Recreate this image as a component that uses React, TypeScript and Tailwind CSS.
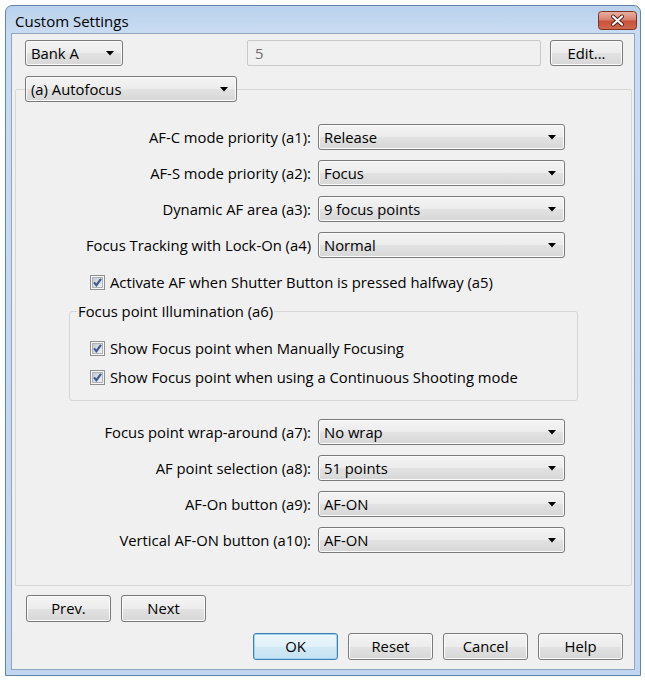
import React from "react";

function Arrow() {
  return (
    <svg width="8" height="5" viewBox="0 0 8 5" className="shrink-0">
      <polygon points="0,0 8,0 4,4.5" fill="#000" />
    </svg>
  );
}

function Combo({ text, w }: { text: string; w: string }) {
  return (
    <div
      className={`flex h-[26px] ${w} items-center justify-between rounded-[3px] border border-[#7a7a7a] bg-[linear-gradient(to_bottom,#f4f4f4_0%,#ececec_50%,#e2e2e2_50%,#d7d7d7_100%)] pl-[5px] pr-[8px] shadow-[inset_0_0_0_1px_#fbfbfb] leading-none`}
    >
      <span>{text}</span>
      <Arrow />
    </div>
  );
}

function Btn({ text, def }: { text: string; def?: boolean }) {
  return def ? (
    <div className="flex h-[27px] w-[85px] items-center justify-center rounded-[3px] border border-[#3c7fb1] bg-[linear-gradient(to_bottom,#eef7fc_0%,#e0f0f9_50%,#d2e9f5_50%,#c6e1f1_100%)] shadow-[inset_0_0_0_1px_#9fd5f3] leading-none">
      {text}
    </div>
  ) : (
    <div className="flex h-[27px] w-[85px] items-center justify-center rounded-[3px] border border-[#7a7a7a] bg-[linear-gradient(to_bottom,#f4f4f4_0%,#ececec_50%,#e2e2e2_50%,#d7d7d7_100%)] shadow-[inset_0_0_0_1px_#fbfbfb] leading-none">
      {text}
    </div>
  );
}

function Check({ text }: { text: string }) {
  return (
    <div className="flex h-[20px] items-center gap-[5px]">
      <svg width="15" height="15" viewBox="0 0 15 15" className="shrink-0">
        <defs>
          <linearGradient id="cbg" x1="0" y1="0" x2="1" y2="1">
            <stop offset="0" stopColor="#c2c7cd" />
            <stop offset="1" stopColor="#f3f3f4" />
          </linearGradient>
        </defs>
        <rect x="0.5" y="0.5" width="14" height="14" fill="#f6f6f6" stroke="#8e8f8f" />
        <rect x="2.5" y="2.5" width="10" height="10" fill="url(#cbg)" stroke="#aeb2b8" />
        <path d="M4 7.4 L6.4 10.2 L11 3.8" fill="none" stroke="#3f5b91" strokeWidth="2.1" />
      </svg>
      <span className="leading-none">{text}</span>
    </div>
  );
}

function Row({ label, value }: { label: string; value: string }) {
  return (
    <>
      <div className="flex h-[26px] items-center justify-end leading-none">{label}</div>
      <Combo text={value} w="w-[247px]" />
    </>
  );
}

function CloseButton() {
  return (
    <div className="mr-[3px] mt-[5px]">
      <svg width="39" height="19" viewBox="0 0 39 19">
        <defs>
          <linearGradient id="cls" x1="0" y1="0" x2="0" y2="1">
            <stop offset="0" stopColor="#eab2a4" />
            <stop offset="0.45" stopColor="#d88170" />
            <stop offset="0.55" stopColor="#c9523b" />
            <stop offset="1" stopColor="#d06a4e" />
          </linearGradient>
        </defs>
        <rect x="0.5" y="0.5" width="38" height="18" rx="3" fill="url(#cls)" stroke="#7a3427" />
        <path d="M15 5.5 L24 13.5 M24 5.5 L15 13.5" stroke="#4b1d16" strokeWidth="4" strokeLinecap="round" />
        <path d="M15 5.5 L24 13.5 M24 5.5 L15 13.5" stroke="#ffffff" strokeWidth="2.2" strokeLinecap="round" />
      </svg>
    </div>
  );
}

export default function App() {
  return (
    <div className="min-h-screen bg-white pl-[5px] pt-[5px] font-['Open_Sans','Noto_Sans',sans-serif] text-[14.8px] text-black">
      <div className="flex h-[671px] w-[636px] flex-col rounded-t-[7px] border border-[#6384a6] bg-[linear-gradient(to_bottom,#b9d1ec_0px,#cadcf2_28px,#c2d7ef_100%)]">
        <div className="flex h-[27px] shrink-0 items-start justify-between">
          <span className="pl-[9px] pt-[5px] text-[15px] leading-[20px]">Custom Settings</span>
          <CloseButton />
        </div>
        <div className="mx-[5px] mb-[5px] flex flex-1 flex-col border border-[#8ea6c2] bg-[#f0f0f0]">
          <div className="ml-[13px] mt-[6px] flex items-center">
            <Combo text="Bank A" w="w-[98px]" />
            <div className="ml-[124px] flex h-[26px] w-[294px] items-center rounded-[2px] border border-[#c9c9c9] pl-[7px] leading-none text-[#6d6d6d]">
              5
            </div>
            <div className="ml-[9px] flex h-[26px] w-[73px] items-center justify-center rounded-[3px] border border-[#7a7a7a] bg-[linear-gradient(to_bottom,#f4f4f4_0%,#ececec_50%,#e2e2e2_50%,#d7d7d7_100%)] shadow-[inset_0_0_0_1px_#fbfbfb] leading-none">
              Edit...
            </div>
          </div>
          <div className="relative z-10 ml-[13px] mt-[10px]">
            <Combo text="(a) Autofocus" w="w-[212px]" />
          </div>
          <div className="-mt-[13px] ml-[3px] mr-[2px] rounded-[2px] border border-[#d7d7d7] pb-[32px] pt-[34px]">
            <div className="grid grid-cols-[295px_247px] gap-x-[7px] gap-y-[10px]">
              <Row label="AF-C mode priority (a1):" value="Release" />
              <Row label="AF-S mode priority (a2):" value="Focus" />
              <Row label="Dynamic AF area (a3):" value="9 focus points" />
              <Row label="Focus Tracking with Lock-On (a4)" value="Normal" />
            </div>
            <div className="ml-[74px] mt-[14px]">
              <Check text="Activate AF when Shutter Button is pressed halfway (a5)" />
            </div>
            <fieldset className="ml-[53px] mt-[9px] w-[509px] rounded-[3px] border border-[#d5d5d5] pb-[13px] pl-[20px]">
              <legend className="-ml-[13px] px-[1px] leading-[20px]">Focus point Illumination (a6)</legend>
              <div className="mt-[17px] flex flex-col gap-[9px]">
                <Check text="Show Focus point when Manually Focusing" />
                <Check text="Show Focus point when using a Continuous Shooting mode" />
              </div>
            </fieldset>
            <div className="mt-[18px] grid grid-cols-[295px_247px] gap-x-[7px] gap-y-[10px]">
              <Row label="Focus point wrap-around (a7):" value="No wrap" />
              <Row label="AF point selection (a8):" value="51 points" />
              <Row label="AF-On button (a9):" value="AF-ON" />
              <Row label="Vertical AF-ON button (a10):" value="AF-ON" />
            </div>
          </div>
          <div className="ml-[14px] mt-[9px] flex gap-[10px]">
            <Btn text="Prev." />
            <Btn text="Next" />
          </div>
          <div className="mr-[11px] mt-[11px] flex justify-end gap-[10px]">
            <Btn text="OK" def />
            <Btn text="Reset" />
            <Btn text="Cancel" />
            <Btn text="Help" />
          </div>
        </div>
      </div>
    </div>
  );
}
